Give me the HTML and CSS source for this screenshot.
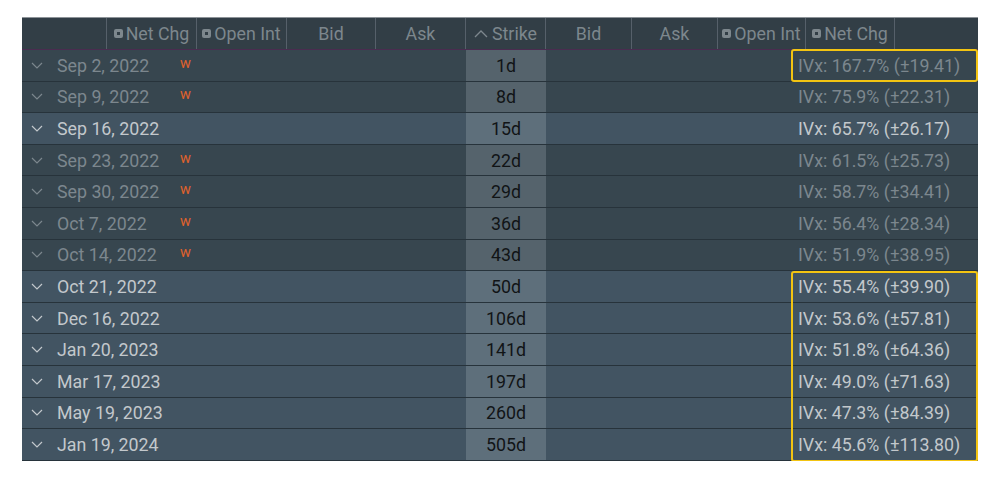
FILE: index.html
```html
<!DOCTYPE html>
<html>
<head>
<meta charset="utf-8">
<link rel="stylesheet" href="styles.css">
</head>
<body>
<div class="chain">
  <div class="head">
    <div class="hc"></div>
    <div class="hc"><svg class="sq" viewBox="0 0 9 9"><rect x="0" y="0" width="9" height="9" rx="2" fill="#7d878d"/><rect x="3" y="3" width="3" height="3" fill="#323e46"/></svg>Net Chg</div>
    <div class="hc"><svg class="sq" viewBox="0 0 9 9"><rect x="0" y="0" width="9" height="9" rx="2" fill="#7d878d"/><rect x="3" y="3" width="3" height="3" fill="#323e46"/></svg>Open Int</div>
    <div class="hc">Bid</div>
    <div class="hc">Ask</div>
    <div class="hc"><svg class="up" viewBox="0 0 14 8"><polyline points="1,7 7,1 13,7" fill="none" stroke="#7d878d" stroke-width="1.3"/></svg>Strike</div>
    <div class="hc">Bid</div>
    <div class="hc">Ask</div>
    <div class="hc"><svg class="sq" viewBox="0 0 9 9"><rect x="0" y="0" width="9" height="9" rx="2" fill="#7d878d"/><rect x="3" y="3" width="3" height="3" fill="#323e46"/></svg>Open Int</div>
    <div class="hc"><svg class="sq" viewBox="0 0 9 9"><rect x="0" y="0" width="9" height="9" rx="2" fill="#7d878d"/><rect x="3" y="3" width="3" height="3" fill="#323e46"/></svg>Net Chg</div>
    <div class="hc last"></div>
  </div>
  <div class="body">
    <div class="row dim"><div class="date"><svg class="chev" viewBox="0 0 12 7"><polyline points="1,1 6,6 11,1" fill="none" stroke="currentColor" stroke-width="1.2"/></svg><span class="dt">Sep 2, 2022</span><span class="w">w</span></div><div class="strike">1d</div><div class="mid"></div><div class="ivx">IVx: 167.7% (±19.41)</div></div>
    <div class="row dim"><div class="date"><svg class="chev" viewBox="0 0 12 7"><polyline points="1,1 6,6 11,1" fill="none" stroke="currentColor" stroke-width="1.2"/></svg><span class="dt">Sep 9, 2022</span><span class="w">w</span></div><div class="strike">8d</div><div class="mid"></div><div class="ivx">IVx: 75.9% (±22.31)</div></div>
    <div class="row act"><div class="date"><svg class="chev" viewBox="0 0 12 7"><polyline points="1,1 6,6 11,1" fill="none" stroke="currentColor" stroke-width="1.2"/></svg><span class="dt">Sep 16, 2022</span></div><div class="strike">15d</div><div class="mid"></div><div class="ivx">IVx: 65.7% (±26.17)</div></div>
    <div class="row dim"><div class="date"><svg class="chev" viewBox="0 0 12 7"><polyline points="1,1 6,6 11,1" fill="none" stroke="currentColor" stroke-width="1.2"/></svg><span class="dt">Sep 23, 2022</span><span class="w">w</span></div><div class="strike">22d</div><div class="mid"></div><div class="ivx">IVx: 61.5% (±25.73)</div></div>
    <div class="row dim"><div class="date"><svg class="chev" viewBox="0 0 12 7"><polyline points="1,1 6,6 11,1" fill="none" stroke="currentColor" stroke-width="1.2"/></svg><span class="dt">Sep 30, 2022</span><span class="w">w</span></div><div class="strike">29d</div><div class="mid"></div><div class="ivx">IVx: 58.7% (±34.41)</div></div>
    <div class="row dim"><div class="date"><svg class="chev" viewBox="0 0 12 7"><polyline points="1,1 6,6 11,1" fill="none" stroke="currentColor" stroke-width="1.2"/></svg><span class="dt">Oct 7, 2022</span><span class="w">w</span></div><div class="strike">36d</div><div class="mid"></div><div class="ivx">IVx: 56.4% (±28.34)</div></div>
    <div class="row dim"><div class="date"><svg class="chev" viewBox="0 0 12 7"><polyline points="1,1 6,6 11,1" fill="none" stroke="currentColor" stroke-width="1.2"/></svg><span class="dt">Oct 14, 2022</span><span class="w">w</span></div><div class="strike">43d</div><div class="mid"></div><div class="ivx">IVx: 51.9% (±38.95)</div></div>
    <div class="row act"><div class="date"><svg class="chev" viewBox="0 0 12 7"><polyline points="1,1 6,6 11,1" fill="none" stroke="currentColor" stroke-width="1.2"/></svg><span class="dt">Oct 21, 2022</span></div><div class="strike">50d</div><div class="mid"></div><div class="ivx">IVx: 55.4% (±39.90)</div></div>
    <div class="row act"><div class="date"><svg class="chev" viewBox="0 0 12 7"><polyline points="1,1 6,6 11,1" fill="none" stroke="currentColor" stroke-width="1.2"/></svg><span class="dt">Dec 16, 2022</span></div><div class="strike">106d</div><div class="mid"></div><div class="ivx">IVx: 53.6% (±57.81)</div></div>
    <div class="row act"><div class="date"><svg class="chev" viewBox="0 0 12 7"><polyline points="1,1 6,6 11,1" fill="none" stroke="currentColor" stroke-width="1.2"/></svg><span class="dt">Jan 20, 2023</span></div><div class="strike">141d</div><div class="mid"></div><div class="ivx">IVx: 51.8% (±64.36)</div></div>
    <div class="row act"><div class="date"><svg class="chev" viewBox="0 0 12 7"><polyline points="1,1 6,6 11,1" fill="none" stroke="currentColor" stroke-width="1.2"/></svg><span class="dt">Mar 17, 2023</span></div><div class="strike">197d</div><div class="mid"></div><div class="ivx">IVx: 49.0% (±71.63)</div></div>
    <div class="row act"><div class="date"><svg class="chev" viewBox="0 0 12 7"><polyline points="1,1 6,6 11,1" fill="none" stroke="currentColor" stroke-width="1.2"/></svg><span class="dt">May 19, 2023</span></div><div class="strike">260d</div><div class="mid"></div><div class="ivx">IVx: 47.3% (±84.39)</div></div>
    <div class="row act"><div class="date"><svg class="chev" viewBox="0 0 12 7"><polyline points="1,1 6,6 11,1" fill="none" stroke="currentColor" stroke-width="1.2"/></svg><span class="dt">Jan 19, 2024</span></div><div class="strike">505d</div><div class="mid"></div><div class="ivx">IVx: 45.6% (±113.80)</div></div>
  </div>
  <div class="hl hl1"></div>
  <div class="hl hl2"></div>
</div>
</body>
</html>
```
FILE: styles.css
```css
html, body {
  margin: 0;
  padding: 0;
  background: #ffffff;
}
body {
  padding: 17px 0 0 22px;
  font-family: Roboto, "Liberation Sans", sans-serif;
}
.chain {
  position: relative;
  width: 956px;
}
.head {
  display: grid;
  grid-template-columns: 85px 90px 90px 89px 90px 80px 86px 86px 88px 89px 83px;
  height: 31px;
  background: #323e46;
  border-top: 1px solid #8d9398;
  border-bottom: 1px solid #4a2c50;
}
.hc {
  display: flex;
  align-items: center;
  justify-content: center;
  color: #7d878d;
  font-size: 17.8px;
  border-right: 1px solid #56606a;
  white-space: nowrap;
}
.hc.last {
  border-right: none;
}
.sq {
  width: 9px;
  height: 9px;
  margin-right: 3px;
}
.up {
  width: 14px;
  height: 8px;
  margin-right: 4px;
}
.row {
  display: flex;
  height: 30.6px;
  border-bottom: 1px solid #27333b;
  font-size: 17.8px;
}
.row.dim {
  background: #37464f;
  color: #7c878e;
}
.row.act {
  background: #425462;
  color: #c3c8cc;
}
.date {
  width: 444px;
  display: flex;
  align-items: center;
  padding-left: 9px;
  box-sizing: border-box;
}
.chev {
  width: 12px;
  height: 7px;
  margin-right: 14px;
}
.dt {
  width: 123px;
}
.w {
  color: #e0622c;
  font-size: 14.5px;
  margin-top: -4px;
}
.strike {
  width: 80px;
  display: flex;
  align-items: center;
  justify-content: center;
  color: #111416;
}
.dim .strike {
  background: #55636c;
}
.act .strike {
  background: #5e6f7b;
}
.mid {
  width: 245px;
}
.ivx {
  width: 187px;
  display: flex;
  align-items: center;
  padding-left: 7px;
  box-sizing: border-box;
  white-space: nowrap;
}
.hl {
  position: absolute;
  left: 769px;
  width: 187px;
  border: 2px solid #f3c412;
  border-radius: 3px;
  box-sizing: border-box;
}
.hl1 {
  top: 32px;
  height: 33px;
}
.hl2 {
  top: 254px;
  height: 191px;
}
```
